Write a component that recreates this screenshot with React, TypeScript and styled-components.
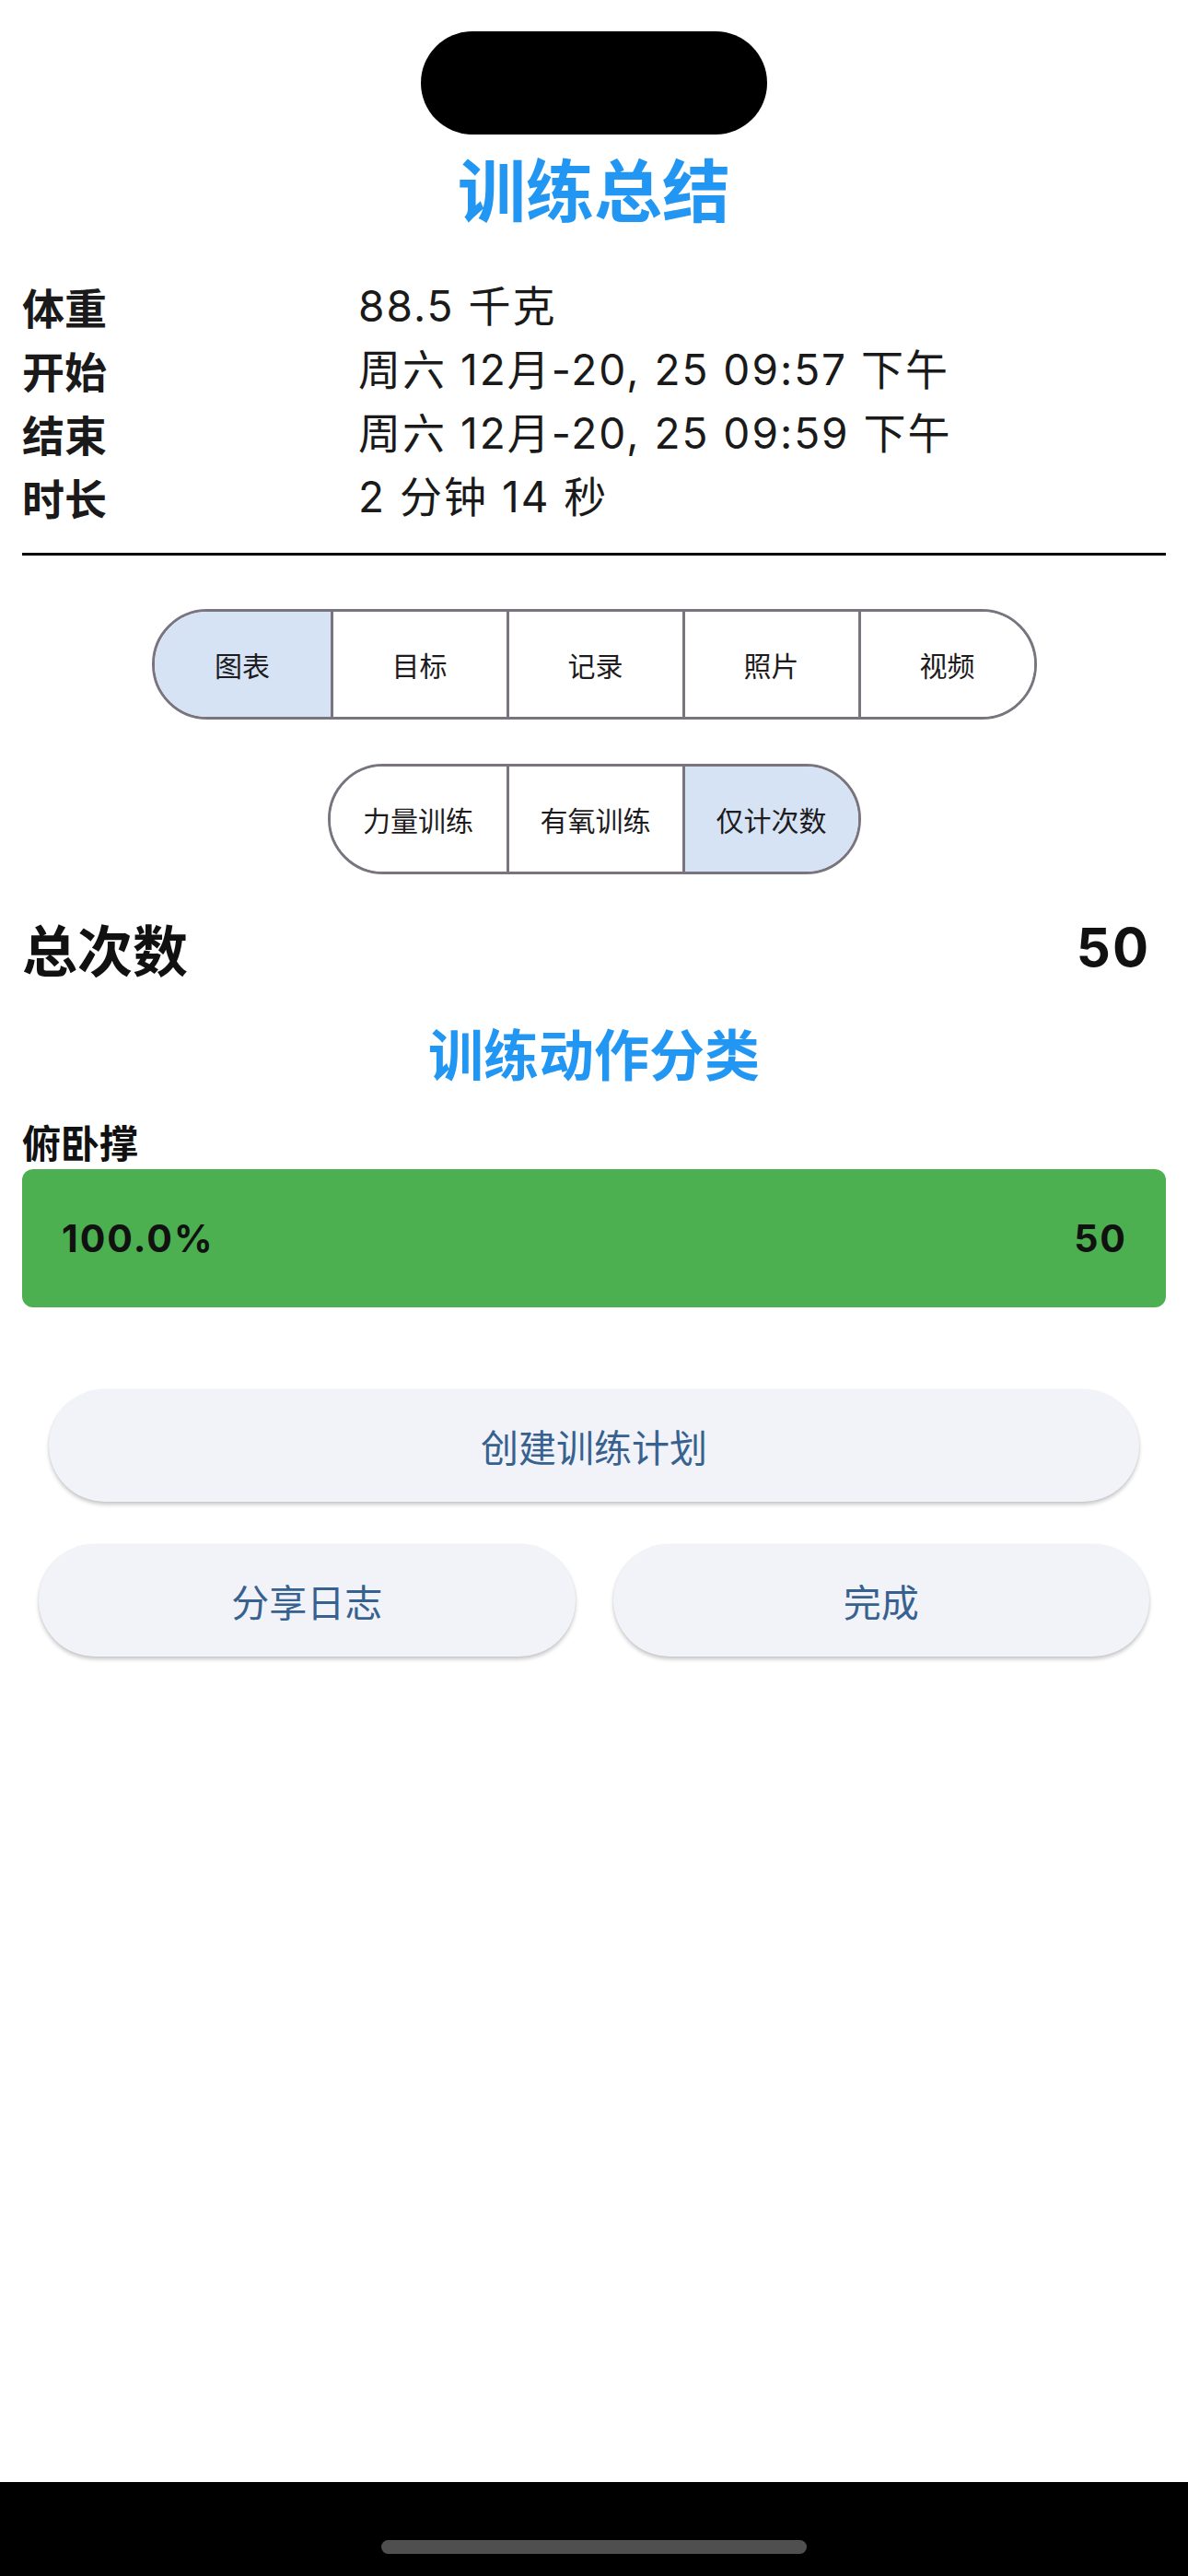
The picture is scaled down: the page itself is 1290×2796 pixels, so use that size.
import React from "react";
import styled, { createGlobalStyle } from "styled-components";

const Global = createGlobalStyle`
  html, body { margin: 0; padding: 0; background: #ffffff; }
  body { font-family: "Noto Sans", "Noto Sans CJK SC", sans-serif; }
  * { box-sizing: border-box; }
`;

const Page = styled.div`
  width: 1290px;
  min-height: 2796px;
  display: flex;
  flex-direction: column;
  background: #ffffff;
`;

const Island = styled.div`
  align-self: center;
  width: 376px;
  height: 112px;
  margin-top: 34px;
  border-radius: 56px;
  background: #000000;
`;

const Title = styled.h1<{ $size: number; $lh: number; $mt: number }>`
  margin: ${(p) => p.$mt}px 0 0;
  text-align: center;
  color: #2196f3;
  font-family: "Noto Sans CJK SC", sans-serif;
  font-weight: 700;
  font-size: ${(p) => p.$size}px;
  line-height: ${(p) => p.$lh}px;
`;

const InfoGrid = styled.div`
  display: grid;
  grid-template-columns: 365px 1fr;
  margin-top: 50px;
  padding: 0 24px;
  font-size: 46px;
  line-height: 69px;
  color: #1a1a1a;
`;

const InfoLabel = styled.div`
  font-family: "Noto Sans CJK SC", sans-serif;
  font-weight: 700;
`;

const InfoValue = styled.div`
  font-family: Inter, "Noto Sans CJK SC", sans-serif;
  font-weight: 400;
  letter-spacing: 2px;
`;

const Divider = styled.hr`
  margin: 26px 24px 0;
  border: none;
  height: 3px;
  background: #000000;
`;

const Segmented = styled.div<{ $mt: number }>`
  align-self: center;
  display: flex;
  margin-top: ${(p) => p.$mt}px;
  height: 120px;
  border: 3px solid #79747e;
  border-radius: 60px;
  overflow: hidden;
`;

const Segment = styled.div<{ $active?: boolean }>`
  width: 191px;
  display: flex;
  align-items: center;
  justify-content: center;
  background: ${(p) => (p.$active ? "#d6e3f5" : "#ffffff")};
  color: #1d1b20;
  font-family: "Noto Sans CJK SC", sans-serif;
  font-size: 30px;
  & + & { border-left: 3px solid #79747e; }
`;

const TotalRow = styled.div`
  display: flex;
  justify-content: space-between;
  align-items: center;
  margin-top: 44px;
  padding: 0 24px;
  height: 70px;
  font-family: "Noto Sans CJK SC", sans-serif;
  font-weight: 700;
  font-size: 60px;
  color: #111111;
`;

const TotalNumber = styled.span`
  font-family: Inter, sans-serif;
  font-weight: 700;
  font-size: 58px;
  letter-spacing: 2px;
  padding-right: 17px;
`;

const ExerciseName = styled.div`
  margin-top: 33px;
  padding: 0 24px;
  font-family: "Noto Sans CJK SC", sans-serif;
  font-weight: 700;
  font-size: 42px;
  line-height: 52px;
  color: #111111;
`;

const Bar = styled.div`
  margin: 4px 24px 0;
  height: 150px;
  border-radius: 12px;
  background: #4caf50;
  display: flex;
  align-items: center;
  justify-content: space-between;
  padding: 0 42px 0 43px;
  font-family: Inter, sans-serif;
  font-weight: 700;
  font-size: 41px;
  letter-spacing: 2px;
  color: #111111;
`;

const Button = styled.button`
  flex: 1;
  height: 122px;
  border: none;
  border-radius: 61px;
  background: #f1f3f9;
  box-shadow: 0 3px 4px rgba(0, 0, 0, 0.22), 0 0 2px rgba(0, 0, 0, 0.06);
  color: #37618f;
  font-family: "Noto Sans CJK SC", sans-serif;
  font-size: 41px;
  cursor: pointer;
`;

const ButtonRow = styled.div<{ $mt: number; $px: number }>`
  display: flex;
  gap: 41px;
  margin-top: ${(p) => p.$mt}px;
  padding: 0 ${(p) => p.$px}px;
`;

const BottomBar = styled.div`
  margin-top: auto;
  height: 102px;
  background: #000000;
  display: flex;
  justify-content: center;
  padding-top: 63px;
`;

const HomeIndicator = styled.div`
  width: 462px;
  height: 15px;
  border-radius: 8px;
  background: #4f4f4f;
`;

const info = [
  ["体重", "88.5 千克"],
  ["开始", "周六 12月-20, 25 09:57 下午"],
  ["结束", "周六 12月-20, 25 09:59 下午"],
  ["时长", "2 分钟 14 秒"],
];

export default function App() {
  return (
    <Page>
      <Global />
      <Island />
      <Title $size={74} $lh={90} $mt={12}>训练总结</Title>
      <InfoGrid>
        {info.map(([k, v]) => (
          <React.Fragment key={k}>
            <InfoLabel>{k}</InfoLabel>
            <InfoValue>{v}</InfoValue>
          </React.Fragment>
        ))}
      </InfoGrid>
      <Divider />
      <Segmented $mt={58}>
        <Segment $active>图表</Segment>
        <Segment>目标</Segment>
        <Segment>记录</Segment>
        <Segment>照片</Segment>
        <Segment>视频</Segment>
      </Segmented>
      <Segmented $mt={48}>
        <Segment>力量训练</Segment>
        <Segment>有氧训练</Segment>
        <Segment $active>仅计次数</Segment>
      </Segmented>
      <TotalRow>
        <span>总次数</span>
        <TotalNumber>50</TotalNumber>
      </TotalRow>
      <Title $size={60} $lh={76} $mt={41}>训练动作分类</Title>
      <ExerciseName>俯卧撑</ExerciseName>
      <Bar>
        <span>100.0%</span>
        <span>50</span>
      </Bar>
      <ButtonRow $mt={89} $px={53}>
        <Button>创建训练计划</Button>
      </ButtonRow>
      <ButtonRow $mt={46} $px={42}>
        <Button>分享日志</Button>
        <Button>完成</Button>
      </ButtonRow>
      <BottomBar>
        <HomeIndicator />
      </BottomBar>
    </Page>
  );
}
